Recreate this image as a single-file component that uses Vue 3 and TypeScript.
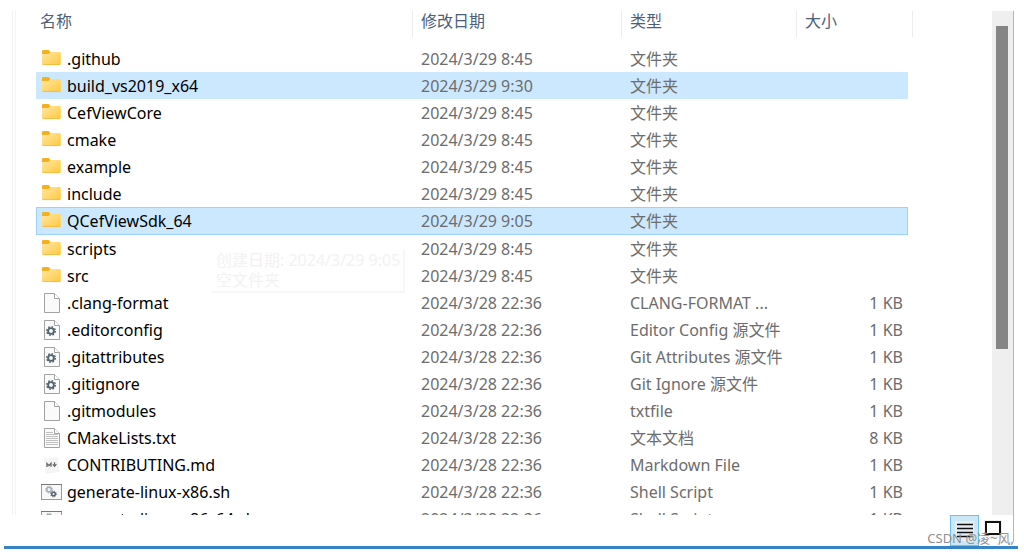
<script setup lang="ts">
type Kind = 'folder' | 'file' | 'config' | 'text' | 'markdown' | 'shell'

interface Entry {
  name: string
  date: string
  type: string
  size: string
  kind: Kind
  state?: 'selected' | 'focused'
}

const folder = (name: string, time = '8:45', state?: Entry['state']): Entry => ({
  name,
  date: `2024/3/29 ${time}`,
  type: '文件夹',
  size: '',
  kind: 'folder',
  state,
})

const file = (name: string, type: string, kind: Kind, size = '1 KB'): Entry => ({
  name,
  date: '2024/3/28 22:36',
  type,
  size,
  kind,
})

const entries: Entry[] = [
  folder('.github'),
  folder('build_vs2019_x64', '9:30', 'selected'),
  folder('CefViewCore'),
  folder('cmake'),
  folder('example'),
  folder('include'),
  folder('QCefViewSdk_64', '9:05', 'focused'),
  folder('scripts'),
  folder('src'),
  file('.clang-format', 'CLANG-FORMAT ...', 'file'),
  file('.editorconfig', 'Editor Config 源文件', 'config'),
  file('.gitattributes', 'Git Attributes 源文件', 'config'),
  file('.gitignore', 'Git Ignore 源文件', 'config'),
  file('.gitmodules', 'txtfile', 'file'),
  file('CMakeLists.txt', '文本文档', 'text', '8 KB'),
  file('CONTRIBUTING.md', 'Markdown File', 'markdown'),
  file('generate-linux-x86.sh', 'Shell Script', 'shell'),
  file('generate-linux-x86_64.sh', 'Shell Script', 'shell'),
]
</script>

<template>
  <main class="window">
    <div class="body">
      <div class="pane">
        <table class="list">
          <colgroup>
            <col />
            <col class="col-date" />
            <col class="col-type" />
            <col class="col-size" />
            <col class="col-end" />
          </colgroup>
          <thead>
            <tr>
              <th scope="col">名称</th>
              <th scope="col">修改日期</th>
              <th scope="col">类型</th>
              <th scope="col" colspan="2">大小</th>
            </tr>
          </thead>
          <tbody>
            <tr v-for="e in entries" :key="e.name" :class="e.state">
              <td class="name">
                <div class="label">
                  <svg class="icon" viewBox="0 0 22 22" aria-hidden="true">
                    <g v-if="e.kind === 'folder'">
                      <path d="M2 3.2Q2 2 3.2 2H8.6L10.4 4H19Q20 4 20 5V8H2Z" fill="#f6b01e" />
                      <path d="M2 6H8.5L10.5 4H19.6Q20.8 4 20.8 5.2V15.6Q20.8 17 19.4 17H3.2Q2 17 2 15.8Z" fill="url(#folder-fill)" />
                      <path d="M2.6 16.6H20.2" stroke="#f0b93c" stroke-width=".8" />
                    </g>
                    <g v-else-if="e.kind === 'shell'">
                      <rect x="1.5" y="3.5" width="20" height="15" fill="#f8f8f8" stroke="#999" />
                      <path d="M1 3.5H22" stroke="#777" />
                      <circle cx="9" cy="8.6" r="2.3" fill="none" stroke="#a3afbb" stroke-width="1.6" />
                      <circle cx="9" cy="8.6" r="3.4" fill="none" stroke="#a3afbb" stroke-width="1" stroke-dasharray="1.3 1.37" />
                      <circle cx="13.5" cy="13" r="1.8" fill="none" stroke="#56626e" stroke-width="1.5" />
                      <circle cx="13.5" cy="13" r="2.9" fill="none" stroke="#56626e" stroke-width="1" stroke-dasharray="1.1 1.18" />
                    </g>
                    <g v-else-if="e.kind === 'markdown'">
                      <path d="M4 4.5L17.5 3L19.5 18L5.8 19.8Z" fill="#f4f4f4" />
                      <path d="M7 13V9.5L9 11.6L11 9.3V12.8" fill="none" stroke="#666" stroke-width="1.3" />
                      <path d="M14.5 8.2V12M12.8 10.4L14.6 12.3L16.4 10" fill="none" stroke="#666" stroke-width="1.2" />
                    </g>
                    <g v-else>
                      <path d="M4.5 1.5H14.5L19.5 6.5V20.5H4.5Z" fill="#fafafa" stroke="#a2a2a2" />
                      <path d="M14.5 1.5V6.5H19.5" fill="#fff" stroke="#a2a2a2" />
                      <g v-if="e.kind === 'config'" fill="none" stroke="#52646e">
                        <circle cx="11" cy="12" r="2.9" stroke-width="1.9" />
                        <circle cx="11" cy="12" r="4.3" stroke-width="1.4" stroke-dasharray="1.7 1.677" />
                      </g>
                      <path v-if="e.kind === 'text'" d="M6 5.5H13M6 7.5H18M6 9.5H18M6 11.5H18M6 13.5H18M6 15.5H18M6 17.5H18" stroke="#c0c0c0" />
                    </g>
                  </svg>
                  <span>{{ e.name }}</span>
                </div>
              </td>
              <td>{{ e.date }}</td>
              <td>{{ e.type }}</td>
              <td class="size">{{ e.size }}</td>
              <td class="end"></td>
            </tr>
          </tbody>
        </table>
        <div class="tip" role="tooltip">创建日期: 2024/3/29 9:05<br />空文件夹</div>
      </div>
      <div class="scrollbar"><div class="thumb"></div></div>
    </div>
    <footer class="status">
      <div class="views">
        <button class="view active" type="button" aria-label="详细信息">
          <svg viewBox="0 0 28 31" aria-hidden="true">
            <rect x="5" y="6" width="19" height="20" fill="#e6eef4" />
            <path d="M7 9.5H23M7 13.5H23M7 17.5H23M7 21.5H23" stroke="#111" stroke-width="1.3" />
          </svg>
        </button>
        <button class="view" type="button" aria-label="大图标">
          <svg viewBox="0 0 28 31" aria-hidden="true">
            <rect x="5" y="5" width="18" height="18" fill="#f0f0f0" />
            <rect x="7" y="7" width="14" height="12" fill="#fff" stroke="#111" stroke-width="2" />
          </svg>
        </button>
      </div>
      <span class="watermark">CSDN @凌~风,</span>
    </footer>
    <svg class="defs" aria-hidden="true">
      <defs>
        <linearGradient id="folder-fill" x1="0" y1="0" x2="1" y2="1">
          <stop offset="0" stop-color="#ffe7a2" />
          <stop offset="1" stop-color="#ffc93f" />
        </linearGradient>
      </defs>
    </svg>
  </main>
</template>

<style>
body {
  margin: 0;
  background: #fff;
}
</style>

<style scoped>
.window {
  position: relative;
  box-sizing: border-box;
  height: 100vh;
  padding: 11px 10px 5px 4px;
  display: flex;
  flex-direction: column;
  font: 16px/20px 'Noto Sans', 'Noto Sans CJK SC', sans-serif;
  color: #6d6d6d;
}
.body {
  flex: 1;
  min-height: 0;
  display: flex;
}
.pane {
  position: relative;
  flex: 1;
  min-width: 0;
  overflow: hidden;
  margin-left: 8px;
  padding: 0 79px 0 23px;
  border-left: 1px solid #f2f2f2;
  box-shadow: inset 2px 0 #fff, inset 3px 0 #f4f4f4;
}
.list {
  width: 100%;
  table-layout: fixed;
  border-collapse: separate;
  border-spacing: 0;
}
.col-date {
  width: 209px;
}
.col-type {
  width: 175px;
}
.col-size {
  width: 111px;
}
.col-end {
  width: 5px;
}
th {
  height: 34px;
  box-sizing: border-box;
  padding: 0 8px 14px;
  text-align: left;
  font-weight: 400;
  color: #4c607a;
  background: linear-gradient(#ececec, #ececec) right top / 1px 26px no-repeat;
}
th:first-child {
  padding-left: 4px;
}
td {
  box-sizing: border-box;
  height: 27px;
  padding: 0 0 0 8px;
  white-space: nowrap;
}
td.name {
  padding-left: 4px;
  color: #000;
}
.label {
  display: flex;
  align-items: center;
  gap: 5px;
}
.icon {
  width: 22px;
  height: 22px;
  flex: none;
}
td.size {
  padding-right: 5px;
  text-align: right;
}
td.end {
  padding: 0;
}
.selected td:not(.end),
.focused td:not(.end) {
  background: #cce8ff;
}
.focused td:not(.end) {
  height: 28px;
  border: solid #99d1ff;
  border-width: 1px 0;
}
.focused td.name:not(.end) {
  border-left-width: 1px;
  padding-left: 3px;
}
.focused td.size:not(.end) {
  border-right-width: 1px;
  padding-right: 4px;
}
.tip {
  position: absolute;
  left: 198px;
  top: 238px;
  padding: 1px 3px 1px 5px;
  border: solid #f7f7f7;
  border-width: 0 2px 2px 0;
  color: #f2f2f2;
}
.scrollbar {
  width: 22px;
  box-sizing: border-box;
  padding: 15px 5px 0 4px;
  background: #efefef;
  border-right: 1px solid #b5b5b5;
}
.thumb {
  height: 66%;
  background: #858585;
}
.status {
  position: relative;
  height: 31px;
  border-bottom: 3px solid #3585c5;
  margin-right: -4px;
}
.views {
  display: flex;
  justify-content: flex-end;
  height: 27px;
  margin-right: 4px;
  padding-right: 5px;
  border-right: 1px solid #b5b5b5;
}
.view {
  box-sizing: border-box;
  width: 29px;
  height: 31px;
  padding: 0;
  border: 0;
  background: none;
}
.view svg {
  display: block;
  width: 28px;
  height: 31px;
}
.active {
  background: #cce8f7;
  box-shadow: inset 0 0 0 1px #6fc0ea;
}
.watermark {
  position: absolute;
  right: 4px;
  bottom: 0;
  font-size: 13px;
  line-height: 16px;
  color: #8f8f8f;
}
.defs {
  position: absolute;
  width: 0;
  height: 0;
}
</style>
